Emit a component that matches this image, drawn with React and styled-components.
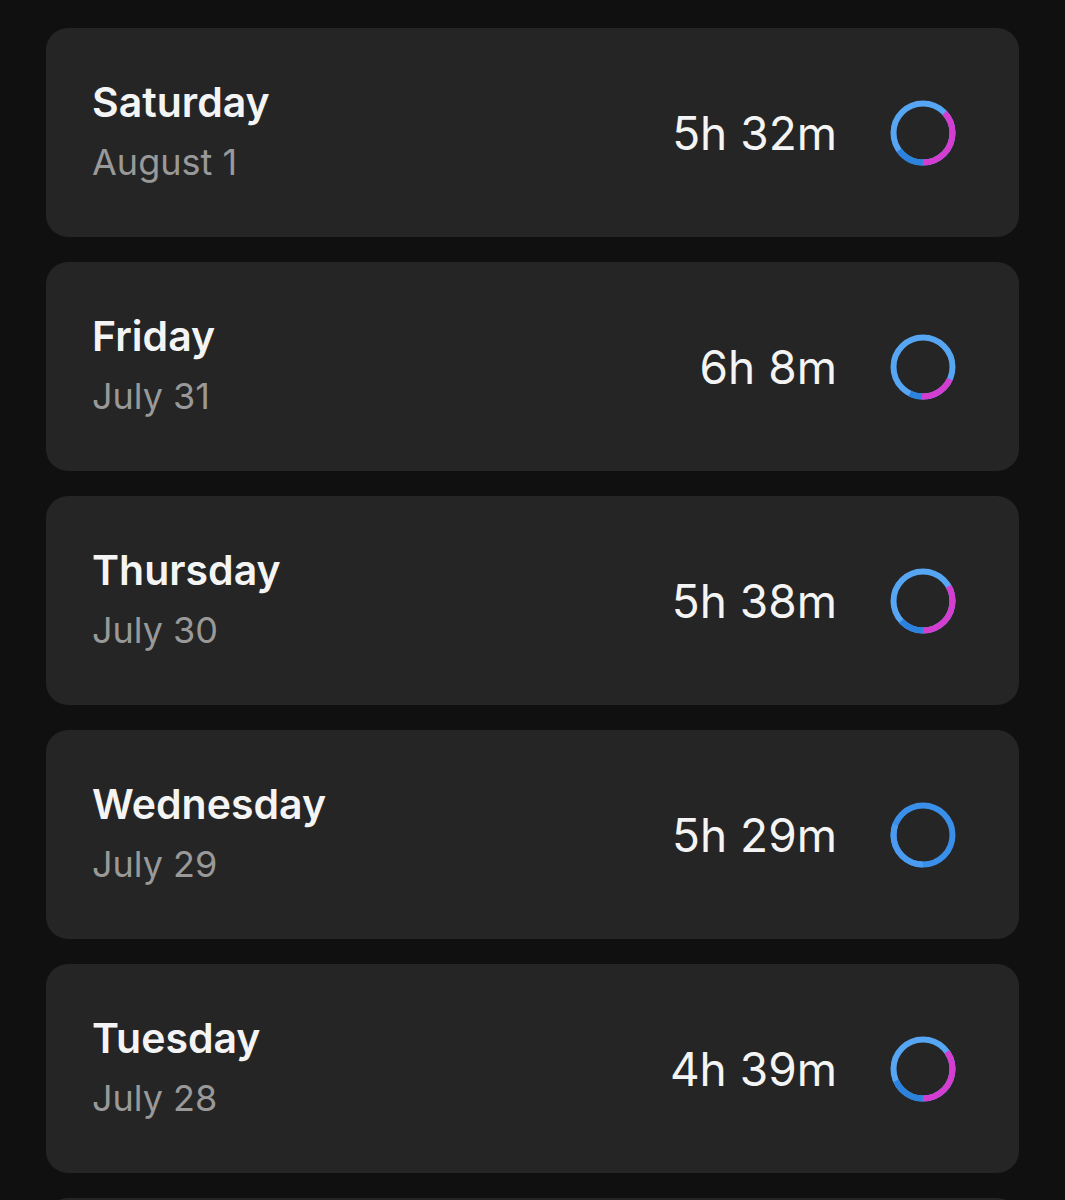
import React from "react";
import styled, { createGlobalStyle } from "styled-components";

const GlobalStyle = createGlobalStyle`
  html, body {
    margin: 0;
    padding: 0;
    background: #101010;
  }
  body {
    font-family: Inter, "Noto Sans", "Liberation Sans", sans-serif;
    -webkit-font-smoothing: antialiased;
  }
`;

// base colour fills the whole ring; arcs are drawn on top (degrees clockwise from 12 o'clock)
const days = [
  {
    day: "Saturday",
    date: "August 1",
    time: "5h 32m",
    base: "#56a6f4",
    arcs: [
      { from: 47, to: 180, color: "#d53dd0" },
      { from: 180, to: 234, color: "#2c82dc" },
    ],
  },
  {
    day: "Friday",
    date: "July 31",
    time: "6h 8m",
    base: "#56a6f4",
    arcs: [
      { from: 114, to: 182, color: "#d53dd0" },
      { from: 182, to: 206, color: "#2c82dc" },
    ],
  },
  {
    day: "Thursday",
    date: "July 30",
    time: "5h 38m",
    base: "#56a6f4",
    arcs: [
      { from: 60, to: 180, color: "#d53dd0" },
      { from: 180, to: 227, color: "#2c82dc" },
    ],
  },
  {
    day: "Wednesday",
    date: "July 29",
    time: "5h 29m",
    base: "#3a8fea",
    arcs: [{ from: 180, to: 290, color: "#4b9cf0" }],
  },
  {
    day: "Tuesday",
    date: "July 28",
    time: "4h 39m",
    base: "#56a6f4",
    arcs: [
      { from: 54, to: 180, color: "#d53dd0" },
      { from: 180, to: 246, color: "#2c82dc" },
    ],
  },
  { day: "", date: "", time: "" },
];

const R = 29.5;
const C = 2 * Math.PI * R;

function Ring({ base, arcs }) {
  return (
    <RingSvg viewBox="0 0 66 66">
      <g transform="rotate(-90 33 33)">
        <circle cx="33" cy="33" r={R} fill="none" stroke={base} strokeWidth="6" />
        {arcs.map((a, i) => {
          const len = ((a.to - a.from) / 360) * C;
          return (
            <circle
              key={i}
              cx="33"
              cy="33"
              r={R}
              fill="none"
              stroke={a.color}
              strokeWidth="6"
              strokeDasharray={`${len} ${C}`}
              strokeDashoffset={-(a.from / 360) * C}
            />
          );
        })}
      </g>
    </RingSvg>
  );
}

export default function App() {
  return (
    <>
      <GlobalStyle />
      <Page>
        {days.map((d, i) => (
          <Card key={i}>
            <Dates>
              <Day>{d.day}</Day>
              <DateText>{d.date}</DateText>
            </Dates>
            {d.time && (
              <Summary>
                <Time>{d.time}</Time>
                <Ring base={d.base} arcs={d.arcs} />
              </Summary>
            )}
          </Card>
        ))}
      </Page>
    </>
  );
}

const Page = styled.div`
  height: 1200px;
  overflow: hidden;
  display: flex;
  flex-direction: column;
  gap: 25px;
  padding: 28px 46px 0;
  box-sizing: border-box;
`;

const Card = styled.div`
  flex: 0 0 209px;
  background: #252525;
  border-radius: 22px;
  display: flex;
  align-items: center;
  justify-content: space-between;
  padding: 0 63px 0 46px;
  box-sizing: border-box;
`;

const Dates = styled.div`
  display: flex;
  flex-direction: column;
  gap: 13px;
  padding-bottom: 2px;
`;

const Day = styled.div`
  color: #f4f4f4;
  font-size: 41px;
  font-weight: 600;
  line-height: 48px;
`;

const DateText = styled.div`
  color: #999999;
  font-size: 36px;
  line-height: 46px;
`;

const Summary = styled.div`
  display: flex;
  align-items: center;
  gap: 53px;
`;

const Time = styled.div`
  color: #f4f4f4;
  font-size: 46px;
  line-height: 54px;
`;

const RingSvg = styled.svg`
  width: 66px;
  height: 66px;
  display: block;
`;
